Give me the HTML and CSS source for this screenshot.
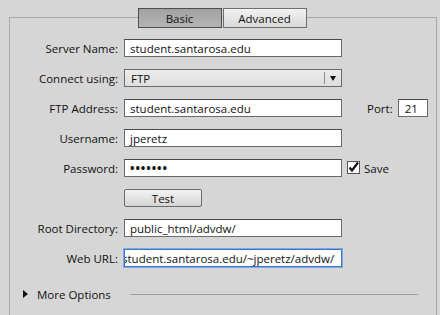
FILE: index.html
```html
<!DOCTYPE html>
<html>
<head>
<meta charset="utf-8">
<link rel="stylesheet" href="styles.css">
</head>
<body>
<div class="group">
  <div class="tabs">
    <div class="tab tab-on">Basic</div>
    <div class="tab">Advanced</div>
  </div>
  <div class="form">
    <div class="row">
      <div class="label">Server Name:</div>
      <div class="field">student.santarosa.edu</div>
    </div>
    <div class="row">
      <div class="label">Connect using:</div>
      <div class="select"><span class="select-text">FTP</span><span class="select-btn"><span class="arrow"></span></span></div>
    </div>
    <div class="row">
      <div class="label">FTP Address:</div>
      <div class="field">student.santarosa.edu</div>
      <div class="port-label">Port:</div>
      <div class="field port">21</div>
    </div>
    <div class="row">
      <div class="label">Username:</div>
      <div class="field">jperetz</div>
    </div>
    <div class="row">
      <div class="label">Password:</div>
      <div class="field dots">•••••••</div>
      <div class="check"><svg width="13" height="13" viewBox="0 0 13 13"><rect x="0.5" y="0.5" width="12" height="12" fill="#fff" stroke="#555"/><path d="M2.5 6.5 L5 9.5 L11 1.5" fill="none" stroke="#111" stroke-width="2.2"/></svg></div>
      <div class="check-label">Save</div>
    </div>
    <div class="row">
      <div class="label"></div>
      <div class="button">Test</div>
    </div>
    <div class="row">
      <div class="label">Root Directory:</div>
      <div class="field">public_html/advdw/</div>
    </div>
    <div class="row">
      <div class="label">Web URL:</div>
      <div class="field focus"><span class="scrolled">student.santarosa.edu/~jperetz/advdw/</span></div>
    </div>
  </div>
  <div class="more">
    <span class="disclosure"></span>
    <span class="more-text">More Options</span>
    <span class="more-line"></span>
  </div>
</div>
</body>
</html>
```
FILE: styles.css
```css
html, body {
  margin: 0;
  padding: 0;
}
body {
  background: #d6d6d6;
  font-family: "Open Sans", "DejaVu Sans", sans-serif;
  font-size: 11.5px;
  color: #111;
  width: 440px;
  height: 315px;
  overflow: hidden;
}
.group {
  box-sizing: border-box;
  margin: 17px 3px 0 9px;
  border: 1px solid #a8a8a8;
  border-bottom: 0;
  height: 298px;
}
.tabs {
  display: flex;
  justify-content: center;
  margin-top: -10px;
  padding-right: 2px;
}
.tab {
  box-sizing: border-box;
  width: 84px;
  height: 20px;
  border: 1px solid #6e6e6e;
  background: linear-gradient(#f2f2f2, #d9d9d9);
  display: flex;
  align-items: center;
  justify-content: center;
}
.tab-on {
  background: linear-gradient(#a2a2a2, #b4b4b4);
  border-color: #4e4e4e;
  margin-right: 1px;
}
.form {
  display: flex;
  flex-direction: column;
  gap: 12px;
  margin-top: 11px;
}
.row {
  display: flex;
  align-items: center;
  height: 18px;
}
.label {
  width: 108px;
  text-align: right;
  flex: none;
}
.field {
  box-sizing: border-box;
  margin-left: 6px;
  width: 218px;
  height: 18px;
  background: #fff;
  border: 1px solid #6a6a6a;
  border-top-color: #4a4a4a;
  padding-left: 5px;
  display: flex;
  align-items: center;
  white-space: nowrap;
  overflow: hidden;
}
.select {
  box-sizing: border-box;
  margin-left: 6px;
  width: 218px;
  height: 18px;
  border: 1px solid #6a6a6a;
  background: linear-gradient(#ececec, #dedede);
  display: flex;
  align-items: center;
}
.select-text {
  flex: 1;
  padding-left: 6px;
}
.select-btn {
  width: 16px;
  height: 12px;
  border-left: 1px solid #8a8a8a;
  display: flex;
  align-items: center;
  justify-content: center;
}
.arrow {
  width: 0;
  height: 0;
  border-left: 3px solid transparent;
  border-right: 3px solid transparent;
  border-top: 5px solid #111;
  margin-top: 1px;
}
.port-label {
  margin-left: 25px;
}
.field.port {
  width: 30px;
  margin-left: 5px;
  padding-left: 6px;
}
.dots {
  font-size: 12px;
  letter-spacing: 0.9px;
  font-weight: bold;
}
.check {
  margin-left: 5px;
  height: 13px;
  margin-top: -2px;
}
.check svg {
  display: block;
}
.check-label {
  margin-left: 4px;
}
.button {
  box-sizing: border-box;
  margin-left: 6px;
  width: 78px;
  height: 18px;
  border: 1px solid #6a6a6a;
  border-radius: 2px;
  background: linear-gradient(#f3f3f3, #d5d5d5);
  display: flex;
  align-items: center;
  justify-content: center;
}
.field.focus {
  border: 1px solid #3d76c9;
  box-shadow: 0 0 0 1px #7fa9e3;
  padding-left: 0;
}
.scrolled {
  margin-left: -3px;
}
.more {
  display: flex;
  align-items: center;
  margin-top: 18px;
  padding-left: 13px;
  height: 18px;
}
.disclosure {
  width: 0;
  height: 0;
  border-left: 5px solid #111;
  border-top: 4px solid transparent;
  border-bottom: 4px solid transparent;
}
.more-text {
  margin-left: 9px;
}
.more-line {
  flex: 1;
  height: 1px;
  background: #a0a0a0;
  margin-left: 19px;
  margin-right: 18px;
}
```
